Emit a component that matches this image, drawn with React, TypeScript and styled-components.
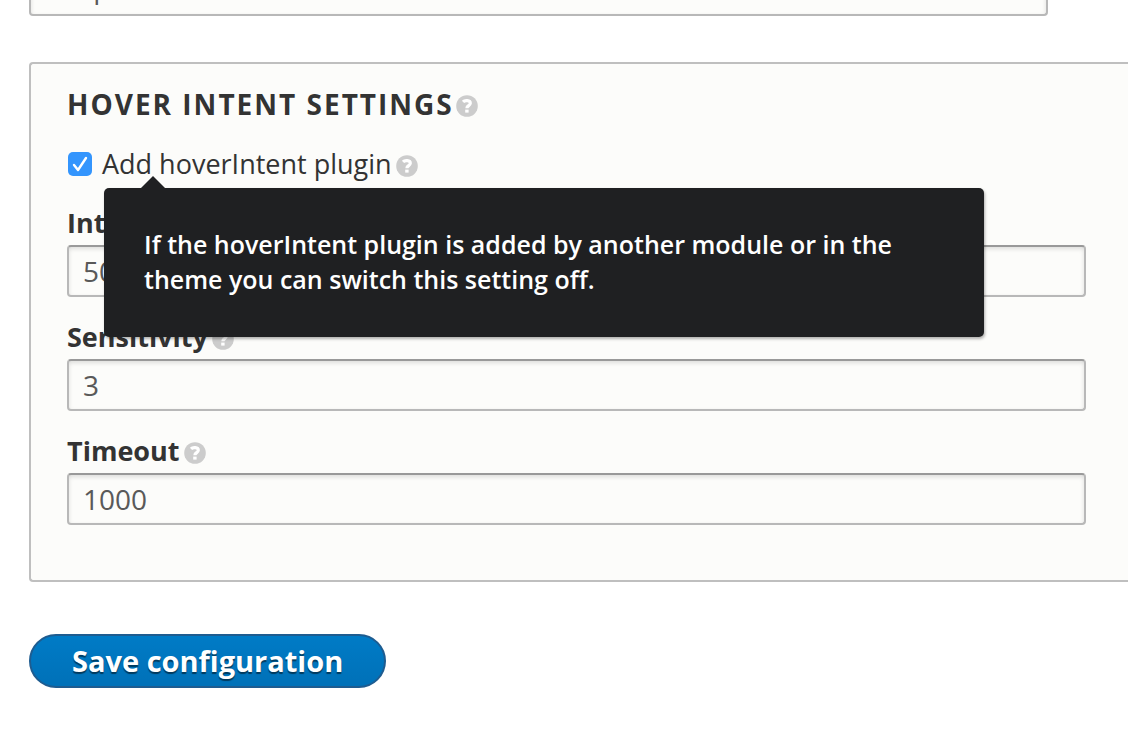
import React from "react";
import styled, { createGlobalStyle } from "styled-components";

const GlobalStyle = createGlobalStyle`
  *, *::before, *::after { box-sizing: border-box; }
  body {
    margin: 0;
    background: #fff;
    color: #333;
    font-family: "Open Sans", "Noto Sans", sans-serif;
    overflow-x: hidden;
  }
`;

const Page = styled.form`
  padding: 0 0 44px 29px;
  overflow: hidden;
`;

const TextInput = styled.input`
  display: block;
  width: 100%;
  height: 52px;
  padding: 0 14px;
  border: 2px solid #b8b8b8;
  border-top-color: #999;
  border-radius: 4px;
  background: #fcfcfa;
  box-shadow: inset 0 2px 4px rgba(0, 0, 0, 0.125);
  color: #595959;
  font-family: inherit;
  font-size: 28px;
  line-height: 36px;
`;

const ScrolledField = styled.div`
  margin: -36px 80px 46px 0;

  ${TextInput} { padding-bottom: 6px; }
`;

const Panel = styled.fieldset`
  min-width: 0;
  margin: 0;
  padding: 21px 42px 55px 36px;
  border: 2px solid #bfbfbf;
  border-right: 0;
  border-radius: 4px 0 0 4px;
  background: #fcfcfa;
`;

const Heading = styled.h2`
  display: flex;
  align-items: center;
  gap: 2px;
  margin: 0;
  font-size: 28px;
  line-height: 38px;
  font-weight: 700;
  letter-spacing: 2px;
  text-transform: uppercase;
`;

const CheckRow = styled.div`
  position: relative;
  display: flex;
  align-items: center;
  gap: 4px;
  margin: 23px 0;
  padding-left: 1px;
  font-size: 27px;
  line-height: 36px;
`;

const CheckLabel = styled.label`
  display: flex;
  align-items: center;
  gap: 10px;
`;

const Checkbox = styled.input`
  appearance: none;
  width: 24px;
  height: 24px;
  margin: 0;
  border-radius: 5px;
  background: #3395fd
    url("data:image/svg+xml,%3Csvg xmlns='http://www.w3.org/2000/svg' viewBox='0 0 24 24'%3E%3Cpath d='M6 13l4 5 8-12' fill='none' stroke='white' stroke-width='2.4' stroke-linecap='round' stroke-linejoin='round'/%3E%3C/svg%3E")
    center / 24px no-repeat;
`;

const Field = styled.div`
  margin-bottom: 22px;

  &:last-child { margin-bottom: 0; }
`;

const FieldHead = styled.div`
  display: flex;
  align-items: flex-start;
  gap: 4px;
  height: 40px;
  font-size: 27px;
  line-height: 36px;
  font-weight: 700;
`;

const HelpButton = styled.button`
  display: block;
  flex: none;
  width: 22px;
  height: 22px;
  margin: 4px 0 0;
  padding: 0;
  border: 0;
  background: none;

  svg { display: block; }

  ${FieldHead} & { margin-top: 9px; }
`;

const Tooltip = styled.div`
  position: absolute;
  z-index: 1;
  top: 42px;
  left: 37px;
  width: 880px;
  max-width: 100%;
  padding: 39px 40px 40px;
  border-radius: 5px;
  background: #1f2022;
  box-shadow: 1px 2px 3px rgba(0, 0, 0, 0.3);
  color: #fff;
  font-size: 25px;
  line-height: 35px;
  font-weight: 600;

  &::before {
    content: "";
    position: absolute;
    top: -12px;
    left: 37px;
    border: 12px solid transparent;
    border-top: 0;
    border-bottom-color: #1f2022;
  }
`;

const SaveButton = styled.button`
  display: block;
  margin-top: 52px;
  height: 54px;
  padding: 0 41px;
  border: 2px solid #1e5c90;
  border-radius: 27px;
  background: linear-gradient(#007bc6, #0071b8);
  color: #fff;
  font-family: inherit;
  font-size: 29px;
  line-height: 40px;
  font-weight: 700;
  text-shadow: 0 2px 1px rgba(0, 0, 0, 0.5);
`;

function Help({ topic }: { topic: string }) {
  return (
    <HelpButton type="button" aria-label={`Help: ${topic}`}>
      <svg width="22" height="22" viewBox="0 0 22 22" aria-hidden="true">
        <circle cx="11" cy="11" r="10.8" fill="#ccc" />
        <path
          d="M7 6.9C8.8 5 14.3 5 14.3 8.3c0 2.3-3.4 2.3-3.4 4.9"
          fill="none"
          stroke="#fff"
          strokeWidth="3.2"
        />
        <rect x="9.2" y="14.6" width="3.4" height="3" fill="#fff" />
      </svg>
    </HelpButton>
  );
}

function NumberField({ id, label, value }: { id: string; label: string; value: string }) {
  return (
    <Field>
      <FieldHead>
        <label htmlFor={id}>{label}</label>
        <Help topic={label} />
      </FieldHead>
      <TextInput id={id} defaultValue={value} />
    </Field>
  );
}

export default function App() {
  return (
    <>
      <GlobalStyle />
      <Page onSubmit={(e) => e.preventDefault()}>
        <ScrolledField>
          <TextInput aria-label="Mode" defaultValue="Loop" />
        </ScrolledField>
        <Panel>
          <Heading>
            Hover Intent Settings
            <Help topic="Hover Intent Settings" />
          </Heading>
          <CheckRow>
            <CheckLabel>
              <Checkbox type="checkbox" defaultChecked aria-describedby="hover-tip" />
              Add hoverIntent plugin
            </CheckLabel>
            <Help topic="Add hoverIntent plugin" />
            <Tooltip id="hover-tip" role="tooltip">
              If the hoverIntent plugin is added by another module or in the theme you can switch
              this setting off.
            </Tooltip>
          </CheckRow>
          <NumberField id="interval" label="Interval" value="50" />
          <NumberField id="sensitivity" label="Sensitivity" value="3" />
          <NumberField id="timeout" label="Timeout" value="1000" />
        </Panel>
        <SaveButton type="submit">Save configuration</SaveButton>
      </Page>
    </>
  );
}
